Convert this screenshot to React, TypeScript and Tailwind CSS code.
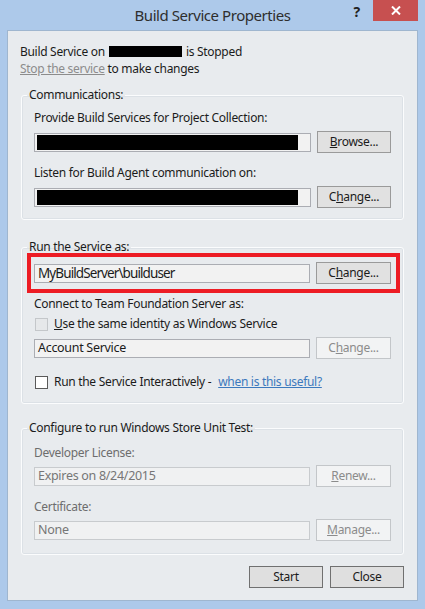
function Btn({ children, disabled = false, w = "w-[75px]" }: { children: React.ReactNode; disabled?: boolean; w?: string }) {
  return (
    <div
      className={`${w} h-[22px] shrink-0 flex items-center justify-center border ${
        disabled ? "border-[#c3c6c9] bg-[#f2f3f4] text-[#8b8b8b]" : "border-[#9a9a9a] bg-[#e1e1e1] text-[#1b1b1b]"
      }`}
    >
      {children}
    </div>
  );
}

function Box({ children, disabled = false, redacted = false }: { children?: React.ReactNode; disabled?: boolean; redacted?: boolean }) {
  return (
    <div
      className={`flex-1 h-[19px] border flex items-center pl-[2px] text-[12.5px] ${
        disabled ? "border-[#c8cbce] bg-[#f0f1f2] text-[#767676]" : "border-[#abadb3] bg-[#f2f2f2] text-[#1b1b1b]"
      }`}
    >
      {redacted ? <div className="w-[261px] h-[15px] bg-black" /> : <span className="pl-[1px]">{children}</span>}
    </div>
  );
}

function Row({ children }: { children: React.ReactNode }) {
  return <div className="flex items-center gap-[6px]">{children}</div>;
}

function Group({ title, children, className = "" }: { title: string; children: React.ReactNode; className?: string }) {
  return (
    <fieldset className={`mx-[13px] border border-[#fbfcfd] rounded-[3px] px-[12px] shadow-[inset_0_0_0_1px_#dce1e6] ${className}`}>
      <legend className="ml-[-7px] px-[2px] leading-[16px] text-[#1b1b1b]">{title}</legend>
      {children}
    </fieldset>
  );
}

function Check({ disabled = false }: { disabled?: boolean }) {
  return (
    <div
      className={`w-[13px] h-[13px] shrink-0 border ${
        disabled ? "border-[#c4c7ca] bg-[#e6e8ea]" : "border-[#5a5a5a] bg-white"
      }`}
    />
  );
}

export default function App() {
  return (
    <div className="w-[425px] h-[609px] bg-[#adc9ea] flex flex-col font-['Noto_Sans',sans-serif] text-[12px] tracking-[-0.3px] text-[#1b1b1b]">
      <div className="h-[30px] shrink-0 grid grid-cols-[1fr_auto_1fr]">
        <div />
        <div className="pt-[4px] text-[15px] tracking-[-0.45px] leading-[22px] text-[#2e2e2e]">Build Service Properties</div>
        <div className="flex justify-end items-start">
          <div className="mt-[5px] mr-[13px] text-[14px] font-bold leading-[14px] text-[#222]">?</div>
          <div className="w-[45px] h-[21px] mr-[7px] bg-[#c75050] flex items-center justify-center">
            <svg width="10" height="9" viewBox="0 0 10 9">
              <path d="M1 0.5 L9 8.5 M9 0.5 L1 8.5" stroke="white" strokeWidth="2" />
            </svg>
          </div>
        </div>
      </div>

      <div className="mx-[7px] mb-[8px] flex-1 border border-[#9fb6cf] bg-[#e8ebee] flex flex-col">
        <div className="px-[12px] pt-[12px] leading-[17px]">
          <div className="flex items-center">
            Build Service on <span className="inline-block w-[73px] h-[11px] bg-black mx-[4px]" /> is Stopped
          </div>
          <div>
            <span className="text-[#8c8c8c] underline">Stop the service</span> to make changes
          </div>
        </div>

        <Group title="Communications:" className="mt-[10px] pt-[7px] pb-[11px]">
          <div className="leading-[16px]">Provide Build Services for Project Collection:</div>
          <div className="mt-[5px]">
            <Row>
              <Box redacted />
              <Btn w="w-[74px]">
                <span>
                  <u>B</u>rowse...
                </span>
              </Btn>
            </Row>
          </div>
          <div className="mt-[12px] leading-[16px]">Listen for Build Agent communication on:</div>
          <div className="mt-[5px]">
            <Row>
              <Box redacted />
              <Btn w="w-[74px]">
                <span>
                  C<u>h</u>ange...
                </span>
              </Btn>
            </Row>
          </div>
        </Group>

        <Group title="Run the Service as:" className="mt-[19px] pb-[13px]">
          <div className="mt-[-2px] ml-[-7px] mr-[-9px] border-4 border-[#ed1c24] pl-[3px] pr-[5px] py-[5px]">
            <Row>
              <Box>
                <span className="text-[13.5px] tracking-[-0.9px]">MyBuildServer\builduser</span>
              </Box>
              <Btn>
                <span>
                  C<u>h</u>ange...
                </span>
              </Btn>
            </Row>
          </div>
          <div className="mt-[3px] leading-[16px]">Connect to Team Foundation Server as:</div>
          <div className="mt-[4px] flex items-center gap-[6px] leading-[16px] pl-[1px]">
            <Check disabled />
            <span>
              <u>U</u>se the same identity as Windows Service
            </span>
          </div>
          <div className="mt-[5px]">
            <Row>
              <Box>Account Service</Box>
              <Btn disabled>
                <span>
                  C<u>h</u>ange...
                </span>
              </Btn>
            </Row>
          </div>
          <div className="mt-[15px] flex items-center gap-[6px] leading-[16px] pl-[1px]">
            <Check />
            <span>Run the Service Interactively -</span>
            <span className="ml-[1px] text-[#3c79bd] underline">when is this useful?</span>
          </div>
        </Group>

        <Group title="Configure to run Windows Store Unit Test:" className="mt-[16px] pt-[9px] pb-[13px]">
          <div className="leading-[16px] text-[#6d6d6d]">Developer License:</div>
          <div className="mt-[4px]">
            <Row>
              <Box disabled>Expires on 8/24/2015</Box>
              <Btn disabled>
                <span>
                  <u>R</u>enew...
                </span>
              </Btn>
            </Row>
          </div>
          <div className="mt-[12px] leading-[16px] text-[#6d6d6d]">Certificate:</div>
          <div className="mt-[4px]">
            <Row>
              <Box disabled>None</Box>
              <Btn disabled>
                <span>
                  <u>M</u>anage...
                </span>
              </Btn>
            </Row>
          </div>
        </Group>

        <div className="mt-[11px] mx-[13px] flex justify-end gap-[7px]">
          <div className="w-[74px] h-[22px] border border-[#707070] bg-[#dfdfdf] flex items-center justify-center">Start</div>
          <div className="w-[74px] h-[22px] border border-[#707070] bg-[#dfdfdf] flex items-center justify-center">Close</div>
        </div>
      </div>
    </div>
  );
}
